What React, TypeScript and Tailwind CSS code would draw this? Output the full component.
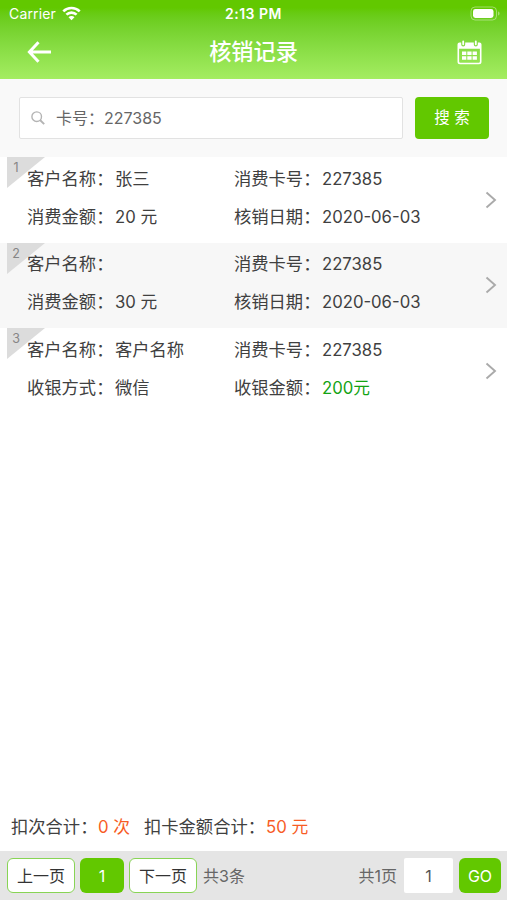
import React from "react";

type Field = { label: string; value: string; green?: boolean };

const records: Field[][] = [
  [
    { label: "客户名称：", value: "张三" },
    { label: "消费卡号：", value: "227385" },
    { label: "消费金额：", value: "20 元" },
    { label: "核销日期：", value: "2020-06-03" },
  ],
  [
    { label: "客户名称：", value: "" },
    { label: "消费卡号：", value: "227385" },
    { label: "消费金额：", value: "30 元" },
    { label: "核销日期：", value: "2020-06-03" },
  ],
  [
    { label: "客户名称：", value: "客户名称" },
    { label: "消费卡号：", value: "227385" },
    { label: "收银方式：", value: "微信" },
    { label: "收银金额：", value: "200元", green: true },
  ],
];

function StatusBar() {
  return (
    <div className="grid h-[27px] grid-cols-3 items-center pl-[9px] pr-[6px] text-[13.5px] leading-none">
      <div className="flex items-center gap-[6px]">
        <span className="text-[14px] tracking-[0.15px]">Carrier</span>
        <svg width="19" height="15" viewBox="0 0 19 15" fill="none" stroke="white" strokeWidth="2.6">
          <path d="M1.3 5.4a11.6 11.6 0 0 1 16.4 0" />
          <path d="M4.4 8.7a7.2 7.2 0 0 1 10.2 0" />
          <path d="M9.5 14.2 6.500 11.200a4.200 4.200 0 0 1 6 0Z" fill="white" stroke="none" />
        </svg>
      </div>
      <span className="whitespace-nowrap pr-[3px] pt-px text-center text-[14px] font-semibold tracking-[0.5px]">2:13 PM</span>
      <svg className="justify-self-end" width="31" height="15" viewBox="0 0 31 15" fill="none">
        <rect x="1" y="1" width="25.5" height="13" rx="4" stroke="white" strokeOpacity=".4" />
        <rect x="3" y="3" width="20.5" height="9" rx="2.4" fill="white" />
        <path d="M28 5.5v4c1-.3 1.6-1 1.6-2s-.6-1.700-1.600-2Z" fill="white" fillOpacity=".4" />
      </svg>
    </div>
  );
}

function NavBar() {
  return (
    <div className="flex h-[50px] items-center justify-between pl-[27px] pr-[25px]">
      <svg width="25" height="22" viewBox="0 0 25 22" fill="none" stroke="white" strokeWidth="3">
        <path d="M11.500 1.300 2.400 11 11.500 20.700M2.400 11H24" />
      </svg>
      <h1 className="mr-[2px] text-[22.200px] font-medium leading-none">核销记录</h1>
      <svg width="25" height="25" viewBox="0 0 25 25">
        <path
          fill="white"
          fillRule="evenodd"
          d="M2.500 2.500h1.700V4.500a2 2 0 0 0 4 0V2.500h8.600V4.500a2 2 0 0 0 4 0V2.500h1.700a2 2 0 0 1 2 2v17.300a2.500 2.500 0 0 1-2.500 2.500H3A2.500 2.500 0 0 1 .5 21.800V4.500a2 2 0 0 1 2-2ZM2.100 8.700V21.500a1.200 1.200 0 0 0 1.200 1.200h18.400a1.200 1.200 0 0 0 1.200-1.200V8.700Z"
        />
        <path d="M6.200 1.300v3M18.800 1.300v3" stroke="white" strokeWidth="1.800" strokeLinecap="round" />
        <path d="M5 11.500h4.300v3.500H5zM10.300 11.500h4.300v3.500h-4.300zM15.600 11.500h4.300v3.500h-4.300zM5 16.200h4.300v3.500H5zM10.300 16.200h4.300v3.500h-4.300zM15.600 16.200h4.300v3.500h-4.300z" fill="white" />
      </svg>
    </div>
  );
}

function SearchBar() {
  return (
    <div className="flex h-[78px] shrink-0 items-center gap-3 bg-[#f9f9f9] pl-[19px] pr-[18px]">
      <div className="flex h-[42px] flex-1 items-center rounded-[2px] border-[1.5px] border-[#e2e2e2] bg-white pl-[11px] text-[#666]">
        <svg width="14" height="14" viewBox="0 0 14 14" fill="none" stroke="#b4b4b4" strokeWidth="1.4">
          <circle cx="5.700" cy="5.700" r="4.800" />
          <path d="m9 9 4.200 4.200" strokeWidth="1.900" />
        </svg>
        <span className="ml-[11px] w-[48px] text-[16px]">卡号：</span>
        <span className="text-[16px]">227385</span>
      </div>
      <button className="h-[42px] w-[74px] rounded-[4px] bg-[#62c800] text-[15.500px] text-white">搜 索</button>
    </div>
  );
}

function RecordRow({ index, fields }: { index: number; fields: Field[] }) {
  return (
    <div className={`relative flex h-[85.5px] shrink-0 items-center pl-[27px] pr-[10px] ${index % 2 ? "bg-[#f7f7f7]" : "bg-white"}`}>
      <svg className="absolute left-[7px] top-0" width="38" height="31" viewBox="0 0 38 31">
        <path d="M0 0h38L0 31Z" fill="#dcdcdc" />
      </svg>
      <span className="absolute left-[7px] top-[3px] w-[18px] text-center text-[12.5px] leading-[15px] text-[#858585]">{index + 1}</span>
      <div className="relative grid flex-1 grid-cols-[207px_1fr] pb-[4px]">
        {fields.map((f) => (
          <div key={f.label} className="flex h-[38px] items-baseline whitespace-nowrap leading-[38px] text-[#404040]">
            <span className="w-[88px] text-[17.3px]">{f.label}</span>
            <span className={`${/\d/.test(f.value) ? "text-[16.700px]" : "text-[17.300px]"} ${f.green ? "text-[#13a313]" : ""}`}>{f.value}</span>
          </div>
        ))}
      </div>
      <svg width="12" height="18" viewBox="0 0 12 18" fill="none" stroke="#aaa" strokeWidth="1.900">
        <path d="m1.500 1.500 8.500 7.500-8.500 7.500" />
      </svg>
    </div>
  );
}

function Summary() {
  return (
    <div className="flex h-[48px] items-baseline whitespace-nowrap pl-[11px] text-[17.3px] leading-[48px] text-[#404040]">
      <span className="w-[87px]">扣次合计：</span>
      <span className="w-[46px] text-[16.800px] text-[#f75c25]">0 次</span>
      <span className="w-[122px]">扣卡金额合计：</span>
      <span className="text-[16.800px] text-[#f75c25]">50 元</span>
    </div>
  );
}

function Pager() {
  return (
    <div className="flex h-[49px] shrink-0 items-center bg-[#e5e5e5] pl-[7px] pr-[6px] text-[16px] text-[#666]">
      <button className="h-[35px] w-[68px] rounded-[6px] border-[1.5px] border-[#88d455] bg-white text-[#333]">上一页</button>
      <button className="ml-[5px] h-[35px] w-[44px] rounded-[6px] bg-[#62c800] text-white">1</button>
      <button className="ml-[5px] h-[35px] w-[68px] rounded-[6px] border-[1.5px] border-[#88d455] bg-white text-[#333]">下一页</button>
      <span className="ml-[6px]">共3条</span>
      <span className="ml-auto">共1页</span>
      <span className="ml-[7px] flex h-[35px] w-[49px] items-center justify-center rounded-[2px] bg-white text-[#555]">1</span>
      <button className="ml-[6px] h-[35px] w-[42px] rounded-[6px] bg-[#62c800] text-white">GO</button>
    </div>
  );
}

export default function App() {
  return (
    <div className="flex h-[900px] w-[507px] flex-col overflow-hidden bg-white font-['Inter','Noto_Sans_CJK_SC',sans-serif]">
      <header className="h-[79px] shrink-0 bg-linear-to-b from-[#62c800] from-10% to-[#a4ed61] text-white">
        <StatusBar />
        <NavBar />
      </header>
      <SearchBar />
      <main className="flex flex-1 flex-col">
        {records.map((fields, i) => (
          <RecordRow key={i} index={i} fields={fields} />
        ))}
      </main>
      <Summary />
      <Pager />
    </div>
  );
}
